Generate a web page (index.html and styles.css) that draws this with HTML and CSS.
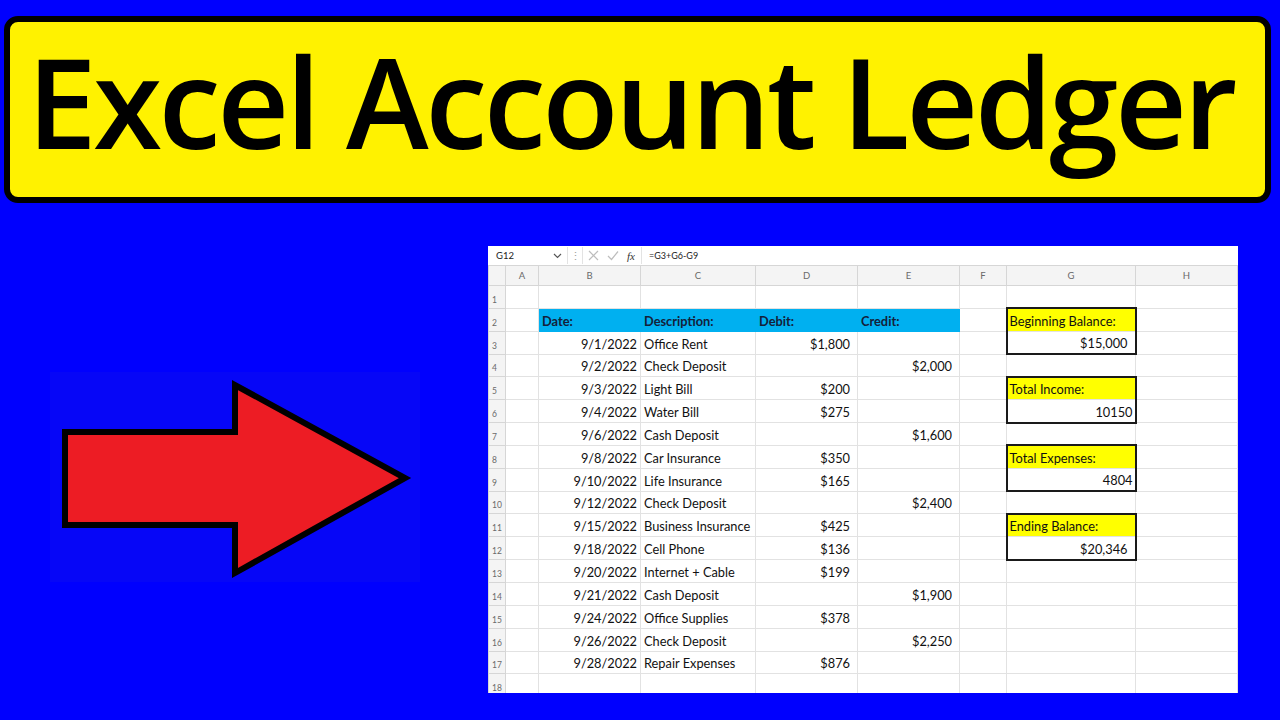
FILE: index.html
```html
<!DOCTYPE html>
<html lang="en">
<head>
<meta charset="utf-8">
<title>Excel Account Ledger</title>
<link rel="stylesheet" href="styles.css">
</head>
<body>
<div class="page">
  <header class="title"><h1>Excel Account Ledger</h1></header>
  <main class="main">
    <div class="arrow-area">
      <svg class="arrow" width="370" height="210" viewBox="0 0 370 210" aria-hidden="true">
        <rect x="0" y="0" width="370" height="210" fill="#0606F7"/>
        <polygon points="15,60 185,60 185,13 355,106 185,201 185,153 15,153" fill="#ED1C24" stroke="#000" stroke-width="6" stroke-linejoin="miter"/>
      </svg>
    </div>
    <section class="sheet">
      <div class="fbar">
        <div class="namebox"><span>G12</span>
          <svg class="chev" width="9" height="6" viewBox="0 0 9 6"><path d="M1 1l3.5 3.5L8 1" fill="none" stroke="#555" stroke-width="1.2"/></svg>
        </div>
        <div class="vdots">⋮</div>
        <div class="ficons">
          <svg width="11" height="11" viewBox="0 0 11 11"><path d="M1 1l9 9M10 1l-9 9" stroke="#BDBDBD" stroke-width="1.2"/></svg>
          <svg width="12" height="11" viewBox="0 0 12 11"><path d="M1 6l3.5 3.5L11 1.5" fill="none" stroke="#BDBDBD" stroke-width="1.2"/></svg>
          <span class="fx">fx</span>
        </div>
        <div class="formula">=G3+G6-G9</div>
      </div>
      <table class="grid">
        <colgroup>
          <col class="c-rh"><col class="c-a"><col class="c-b"><col class="c-c"><col class="c-d"><col class="c-e"><col class="c-f"><col class="c-g"><col class="c-h">
        </colgroup>
        <thead>
          <tr class="colhead"><th class="corner"></th><th>A</th><th>B</th><th>C</th><th>D</th><th>E</th><th>F</th><th>G</th><th>H</th></tr>
        </thead>
        <tbody>
          <tr><th class="rh">1</th><td></td><td></td><td></td><td></td><td></td><td></td><td></td><td></td></tr>
          <tr><th class="rh">2</th><td></td><td class="hd">Date:</td><td class="hd">Description:</td><td class="hd">Debit:</td><td class="hd">Credit:</td><td></td><td class="lbl">Beginning Balance:</td><td></td></tr>
          <tr><th class="rh">3</th><td></td><td class="dt">9/1/2022</td><td class="tx">Office Rent</td><td class="cur">$1,800</td><td></td><td></td><td class="val cur">$15,000</td><td></td></tr>
          <tr><th class="rh">4</th><td></td><td class="dt">9/2/2022</td><td class="tx">Check Deposit</td><td></td><td class="cur">$2,000</td><td></td><td></td><td></td></tr>
          <tr><th class="rh">5</th><td></td><td class="dt">9/3/2022</td><td class="tx">Light Bill</td><td class="cur">$200</td><td></td><td></td><td class="lbl">Total Income:</td><td></td></tr>
          <tr><th class="rh">6</th><td></td><td class="dt">9/4/2022</td><td class="tx">Water Bill</td><td class="cur">$275</td><td></td><td></td><td class="val dt">10150</td><td></td></tr>
          <tr><th class="rh">7</th><td></td><td class="dt">9/6/2022</td><td class="tx">Cash Deposit</td><td></td><td class="cur">$1,600</td><td></td><td></td><td></td></tr>
          <tr><th class="rh">8</th><td></td><td class="dt">9/8/2022</td><td class="tx">Car Insurance</td><td class="cur">$350</td><td></td><td></td><td class="lbl">Total Expenses:</td><td></td></tr>
          <tr><th class="rh">9</th><td></td><td class="dt">9/10/2022</td><td class="tx">Life Insurance</td><td class="cur">$165</td><td></td><td></td><td class="val dt">4804</td><td></td></tr>
          <tr><th class="rh">10</th><td></td><td class="dt">9/12/2022</td><td class="tx">Check Deposit</td><td></td><td class="cur">$2,400</td><td></td><td></td><td></td></tr>
          <tr><th class="rh">11</th><td></td><td class="dt">9/15/2022</td><td class="tx">Business Insurance</td><td class="cur">$425</td><td></td><td></td><td class="lbl">Ending Balance:</td><td></td></tr>
          <tr><th class="rh">12</th><td></td><td class="dt">9/18/2022</td><td class="tx">Cell Phone</td><td class="cur">$136</td><td></td><td></td><td class="val cur">$20,346</td><td></td></tr>
          <tr><th class="rh">13</th><td></td><td class="dt">9/20/2022</td><td class="tx">Internet + Cable</td><td class="cur">$199</td><td></td><td></td><td></td><td></td></tr>
          <tr><th class="rh">14</th><td></td><td class="dt">9/21/2022</td><td class="tx">Cash Deposit</td><td></td><td class="cur">$1,900</td><td></td><td></td><td></td></tr>
          <tr><th class="rh">15</th><td></td><td class="dt">9/24/2022</td><td class="tx">Office Supplies</td><td class="cur">$378</td><td></td><td></td><td></td><td></td></tr>
          <tr><th class="rh">16</th><td></td><td class="dt">9/26/2022</td><td class="tx">Check Deposit</td><td></td><td class="cur">$2,250</td><td></td><td></td><td></td></tr>
          <tr><th class="rh">17</th><td></td><td class="dt">9/28/2022</td><td class="tx">Repair Expenses</td><td class="cur">$876</td><td></td><td></td><td></td><td></td></tr>
          <tr><th class="rh">18</th><td></td><td></td><td></td><td></td><td></td><td></td><td></td><td></td></tr>
        </tbody>
      </table>
    </section>
  </main>
</div>
</body>
</html>
```

FILE: styles.css
```css
* { box-sizing: border-box; }
html, body { margin: 0; padding: 0; }
body {
  width: 1280px;
  height: 720px;
  overflow: hidden;
  background: #0000FE;
  font-family: "Lato", "Open Sans", sans-serif;
}
.page { padding-top: 16px; }

.title {
  margin-left: 4px;
  width: 1267px;
  height: 187px;
  background: #FFF200;
  border: 6px solid #000;
  border-radius: 14px;
  display: flex;
  align-items: center;
}
.title h1 {
  margin: 0 0 18px 17px;
  font-family: "Open Sans", sans-serif;
  font-weight: 600;
  font-size: 125px;
  line-height: 1;
  letter-spacing: -3.5px;
  color: #000;
  white-space: nowrap;
}

.main {
  display: flex;
  margin-top: 43px;
}
.arrow-area {
  width: 488px;
  flex: none;
  padding: 126px 0 0 50px;
}
.arrow { display: block; }

.sheet {
  width: 750px;
  height: 447px;
  background: #fff;
  overflow: hidden;
  flex: none;
}

.fbar {
  display: flex;
  align-items: center;
  height: 19px;
  background: #fff;
  font-size: 9px;
  color: #222;
}
.namebox {
  width: 78px;
  height: 17px;
  margin-left: 2px;
  display: flex;
  align-items: center;
  justify-content: space-between;
  padding: 0 5px 0 6px;
  border-right: 1px solid #E3E3E3;
  font-size: 9.5px;
}
.vdots {
  width: 14px;
  text-align: center;
  color: #A0A0A0;
  font-size: 11px;
  line-height: 1;
}
.ficons {
  display: flex;
  align-items: center;
  gap: 8px;
  height: 17px;
  padding: 0 6px 0 5px;
  border-left: 1px solid #E3E3E3;
}
.fx {
  font-family: "Liberation Serif", serif;
  font-style: italic;
  font-size: 11px;
  color: #333;
}
.formula {
  flex: 1;
  height: 17px;
  line-height: 17px;
  padding-left: 7px;
  border-left: 1px solid #E3E3E3;
  font-size: 9px;
}

.grid {
  margin-top: 0;
  width: 749px;
  table-layout: fixed;
  border-collapse: collapse;
  font-size: 12.8px;
  color: #111;
}
.c-rh { width: 17px; }
.c-a { width: 33px; }
.c-b { width: 102px; }
.c-c { width: 115px; }
.c-d { width: 102px; }
.c-e { width: 102px; }
.c-f { width: 47px; }
.c-g { width: 129px; }
.c-h { width: 102px; }

.grid td, .grid th {
  border: 1px solid #E2E2E2;
  padding: 0;
  white-space: nowrap;
  overflow: visible;
}
.grid tbody tr { height: 22.85px; }
.colhead { height: 20px; }
.colhead th {
  background: #F4F4F4;
  border-color: #D6D6D6;
  font-weight: 400;
  font-size: 9.5px;
  color: #6A6A6A;
  text-align: center;
}
.rh {
  background: #F4F4F4;
  border-color: #D6D6D6 !important;
  font-weight: 400;
  font-size: 8.5px;
  color: #6A6A6A;
  text-align: left;
  padding-left: 3px !important;
  vertical-align: bottom;
  padding-bottom: 3px !important;
}
.grid td { vertical-align: bottom; padding-bottom: 2px; }

.hd {
  background: #00B0F0;
  border-color: #00B0F0 !important;
  font-weight: 700;
  color: #14213A;
  padding-left: 3px !important;
}
.dt { text-align: right; padding-right: 3px !important; }
.tx { padding-left: 3px !important; }
.cur { text-align: right; padding-right: 7px !important; }

.lbl {
  background: #FFFF00;
  border: 2px solid #1A1A1A !important;
  border-bottom: 1px solid #E2E2E2 !important;
  padding-left: 2px !important;
}
.val {
  border: 2px solid #1A1A1A !important;
  border-top: 1px solid #E2E2E2 !important;
}
.val.dt { padding-right: 2px !important; }
```
